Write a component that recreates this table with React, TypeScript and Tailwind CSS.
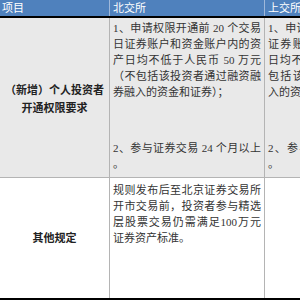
import React from "react";

const J = ({ children }: { children: React.ReactNode }) => (
  <div className="text-justify [text-align-last:justify] whitespace-nowrap">{children}</div>
);
const L = ({ children }: { children: React.ReactNode }) => (
  <div className="whitespace-nowrap">{children}</div>
);

export default function App() {
  return (
    <div className="w-[300px] h-[300px] overflow-hidden bg-white font-['Liberation_Serif','Noto_Sans_CJK_SC',serif] text-[11px] text-[#333333]">
      <div className="w-[430px]">
        {/* header */}
        <div className="grid grid-cols-[110px_155px_165px] h-[16px] bg-[#4f81bd] text-white leading-[16px] border-b-2 border-black box-content">
          <div className="pl-[2px] border-r border-[#9fb8da]">项目</div>
          <div className="pl-[3px] border-r border-[#9fb8da]">北交所</div>
          <div className="pl-[3px]">上交所</div>
        </div>
        {/* row 1 */}
        <div className="grid grid-cols-[110px_155px_165px] h-[160px] bg-[#e9e9e9] border-b border-[#b4b4b4]">
          <div className="flex flex-col items-center justify-center border-r border-[#b4b4b4] font-bold text-[#222222] leading-[18px] pt-[3px]">
            <div>（新增）个人投资者</div>
            <div>开通权限要求</div>
          </div>
          <div className="border-r border-[#b4b4b4] pl-[3px] pr-[3px] pt-[2px] leading-[16px]">
            <J>1、申请权限开通前 20 个交易</J>
            <J>日证券账户和资金账户内的资</J>
            <J>产日均不低于人民币 50 万元</J>
            <J>（不包括该投资者通过融资融</J>
            <L>券融入的资金和证券）；</L>
            <div className="mt-[40px]">
              <J>2、参与证券交易 24 个月以上</J>
              <L>。</L>
            </div>
          </div>
          <div className="pl-[3px] pr-[3px] pt-[2px] leading-[16px]">
            <J>1、申请权限开通前 20 个交易日</J>
            <J>证券账户和资金账户内的资产</J>
            <J>日均不低于人民币 50 万元（不</J>
            <J>包括该投资者通过融资融券融</J>
            <L>入的资金和证券）；</L>
            <div className="mt-[40px]">
              <J>2、参与证券交易 24 个月以上</J>
              <L>。</L>
            </div>
          </div>
        </div>
        {/* row 2 */}
        <div className="grid grid-cols-[110px_155px_165px] h-[120px] bg-white border-b-2 border-black box-content">
          <div className="flex items-center justify-center border-r border-[#b4b4b4] font-bold text-[#222222]">
            <div>其他规定</div>
          </div>
          <div className="border-r border-[#b4b4b4] pl-[3px] pr-[3px] pt-[4px] leading-[16px]">
            <J>规则发布后至北京证券交易所</J>
            <J>开市交易前，投资者参与精选</J>
            <J>层股票交易仍需满足100万元</J>
            <L>证券资产标准。</L>
          </div>
          <div></div>
        </div>
      </div>
    </div>
  );
}
